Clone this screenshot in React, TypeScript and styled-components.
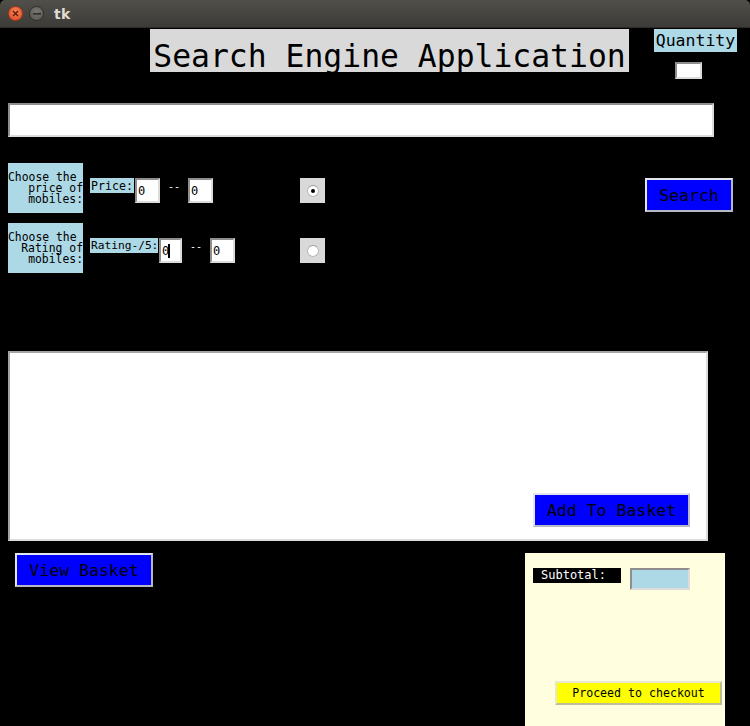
import React from "react";
import styled, { createGlobalStyle } from "styled-components";

const Global = createGlobalStyle`
  html, body { margin: 0; padding: 0; background: #000; }
  body { width: 750px; height: 726px; overflow: hidden; }
  * { box-sizing: border-box; }
`;

const MONO = `"DejaVu Sans Mono", "Liberation Mono", monospace`;

const Window = styled.div`
  width: 750px;
  height: 726px;
  display: flex;
  flex-direction: column;
  background: #000;
  font-family: ${MONO};
`;

const TitleBar = styled.div`
  height: 28px;
  flex: none;
  display: flex;
  align-items: center;
  padding-left: 8px;
  gap: 6px;
  background: linear-gradient(#504f4a, #3c3b37);
  border-radius: 5px 5px 0 0;
  border-bottom: 1px solid #2b2a27;
`;

const WinButton = styled.div<{ $kind: "close" | "min" }>`
  width: 15px;
  height: 15px;
  border-radius: 50%;
  display: flex;
  align-items: center;
  justify-content: center;
  background: ${(p) =>
    p.$kind === "close"
      ? "radial-gradient(circle at 50% 35%, #f58358, #df4a1f)"
      : "radial-gradient(circle at 50% 35%, #77766f, #56554f)"};
  border: 1px solid ${(p) => (p.$kind === "close" ? "#a8371a" : "#2f2e2a")};
`;

const TitleText = styled.span`
  margin-left: 4px;
  font-family: "DejaVu Sans", "Noto Sans", sans-serif;
  font-weight: bold;
  font-size: 14px;
  color: #dfdbd2;
  letter-spacing: 0.3px;
`;

const Content = styled.div`
  flex: 1;
  display: flex;
  flex-direction: column;
  padding-top: 1px;
  min-height: 0;
`;

const Header = styled.div`
  display: flex;
  align-items: flex-start;
  padding-left: 150px;
`;

const TitleLabel = styled.div`
  width: 479px;
  height: 43px;
  background: #d9d9d9;
  color: #000;
  font-size: 31.4px;
  line-height: 29px;
  display: flex;
  align-items: flex-start;
  justify-content: center;
  padding-top: 13px;
  white-space: pre;
`;

const QuantityBox = styled.div`
  margin-left: 25px;
  display: flex;
  flex-direction: column;
  align-items: flex-start;
`;

const BlueLabel = styled.div<{ $w: number; $h: number; $size: number }>`
  width: ${(p) => p.$w}px;
  height: ${(p) => p.$h}px;
  background: #add8e6;
  color: #000;
  font-size: ${(p) => p.$size}px;
  display: flex;
  align-items: center;
  justify-content: center;
  white-space: pre;
  flex: none;
`;

const Entry = styled.div<{ $w: number; $h: number; $bg?: string }>`
  width: ${(p) => p.$w}px;
  height: ${(p) => p.$h}px;
  flex: none;
  background: ${(p) => p.$bg ?? "#fff"};
  border-style: solid;
  border-width: 2px;
  border-color: #8e8e8e #dcdcdc #dcdcdc #8e8e8e;
  color: #000;
  font-size: 12px;
  display: flex;
  align-items: center;
  padding-left: 1px;
`;

const QtyEntry = styled(Entry)`
  margin-top: 10px;
  margin-left: 21px;
`;

const SearchEntry = styled(Entry)`
  margin-top: 24px;
  margin-left: 8px;
`;

const Criteria = styled.div`
  margin-top: 26px;
  display: flex;
  flex-direction: column;
  gap: 10px;
`;

const CriteriaRow = styled.div`
  display: flex;
  align-items: flex-start;
  height: 50px;
  padding-left: 8px;
`;

const ChooseLabel = styled.div`
  width: 75px;
  height: 50px;
  flex: none;
  background: #add8e6;
  color: #000;
  font-size: 11.4px;
  line-height: 11px;
  text-align: right;
  white-space: pre;
  display: flex;
  flex-direction: column;
  justify-content: center;
  padding-right: 0;
`;

const FieldGroup = styled.div`
  width: 210px;
  margin-left: 7px;
  margin-top: 15px;
  display: flex;
  align-items: flex-start;
  flex: none;
`;

const SmallLabel = styled(BlueLabel)`
  justify-content: flex-start;
  padding-left: 1px;
`;

const Dash = styled.span`
  width: 12px;
  margin: 3px 8px 0;
  color: #fff;
  font-size: 10px;
  line-height: 12px;
  white-space: pre;
  flex: none;
`;

const Caret = styled.span`
  display: inline-block;
  width: 2px;
  height: 14px;
  background: #000;
  margin-left: -1px;
`;

const RadioCell = styled.div`
  width: 25px;
  height: 25px;
  margin-top: 15px;
  flex: none;
  background: #d9d9d9;
  display: flex;
  align-items: center;
  justify-content: center;
`;

const RadioDot = styled.div<{ $on: boolean }>`
  width: 12px;
  height: 12px;
  border-radius: 50%;
  background: #fff;
  border: 1px solid #b8b8b8;
  border-top-color: #9a9a9a;
  display: flex;
  align-items: center;
  justify-content: center;
  &::after {
    content: "";
    width: 4px;
    height: 4px;
    border-radius: 50%;
    background: ${(p) => (p.$on ? "#000" : "transparent")};
  }
`;

const Button = styled.div<{ $w: number; $h: number; $bg: string; $size: number }>`
  width: ${(p) => p.$w}px;
  height: ${(p) => p.$h}px;
  flex: none;
  background: ${(p) => p.$bg};
  color: #000;
  font-size: ${(p) => p.$size}px;
  border-style: solid;
  border-width: 2px;
  border-color: #e4e4ec #b8b8c4 #b8b8c4 #e4e4ec;
  display: flex;
  align-items: center;
  justify-content: center;
  white-space: pre;
`;

const SearchButton = styled(Button)`
  margin-left: 320px;
  margin-top: 15px;
`;

const Listbox = styled.div`
  margin-top: 78px;
  margin-left: 8px;
  width: 700px;
  height: 190px;
  flex: none;
  background: #fff;
  border-style: solid;
  border-width: 2px;
  border-color: #a4a4a4 #dcdcdc #dcdcdc #a4a4a4;
  display: flex;
  justify-content: flex-end;
  align-items: flex-end;
  padding: 0 16px 12px 0;
`;

const BottomRow = styled.div`
  margin-top: 12px;
  flex: 1;
  display: flex;
  align-items: flex-start;
  padding-left: 15px;
`;

const BasketPanel = styled.div`
  margin-left: 372px;
  width: 200px;
  align-self: stretch;
  background: #ffffe0;
  display: flex;
  flex-direction: column;
  align-items: flex-start;
  padding: 15px 0 0 8px;
`;

const SubtotalRow = styled.div`
  display: flex;
  align-items: flex-start;
  gap: 9px;
`;

const SubtotalLabel = styled.div`
  width: 88px;
  height: 15px;
  background: #000;
  color: #fff;
  font-size: 12px;
  line-height: 15px;
  padding-left: 8px;
`;

const CheckoutButton = styled(Button)`
  margin-top: 91px;
  margin-left: 22px;
  border-color: #e8e8d0 #bdbd9a #bdbd9a #e8e8d0;
`;

export default function App() {
  return (
    <>
      <Global />
      <Window>
        <TitleBar>
          <WinButton $kind="close">
            <svg width="7" height="7" viewBox="0 0 7 7">
              <path d="M1 1L6 6M6 1L1 6" stroke="#5a1a08" strokeWidth="1.3" />
            </svg>
          </WinButton>
          <WinButton $kind="min">
            <svg width="8" height="2" viewBox="0 0 8 2">
              <rect width="8" height="1.6" fill="#2e2d29" />
            </svg>
          </WinButton>
          <TitleText>tk</TitleText>
        </TitleBar>
        <Content>
          <Header>
            <TitleLabel>Search Engine Application</TitleLabel>
            <QuantityBox>
              <BlueLabel $w={83} $h={23} $size={16.5}>Quantity</BlueLabel>
              <QtyEntry $w={27} $h={17} />
            </QuantityBox>
          </Header>
          <SearchEntry $w={706} $h={34} />
          <Criteria>
            <CriteriaRow>
              <ChooseLabel>{"Choose the \nprice of\nmobiles:"}</ChooseLabel>
              <FieldGroup>
                <SmallLabel $w={44} $h={15} $size={11.6}>Price:</SmallLabel>
                <Entry $w={25} $h={25} style={{ marginLeft: 1 }}>0</Entry>
                <Dash>--</Dash>
                <Entry $w={25} $h={25}>0</Entry>
              </FieldGroup>
              <RadioCell>
                <RadioDot $on={true} />
              </RadioCell>
              <SearchButton $w={88} $h={34} $bg="#0000ff" $size={16.5}>Search</SearchButton>
            </CriteriaRow>
            <CriteriaRow>
              <ChooseLabel>{"Choose the \nRating of\nmobiles:"}</ChooseLabel>
              <FieldGroup>
                <SmallLabel $w={68} $h={15} $size={11.2}>Rating-/5:</SmallLabel>
                <Entry $w={23} $h={25} style={{ marginLeft: 1 }}>
                  0<Caret />
                </Entry>
                <Dash>--</Dash>
                <Entry $w={25} $h={25}>0</Entry>
              </FieldGroup>
              <RadioCell>
                <RadioDot $on={false} />
              </RadioCell>
            </CriteriaRow>
          </Criteria>
          <Listbox>
            <Button $w={157} $h={34} $bg="#0000ff" $size={16.5}>Add To Basket</Button>
          </Listbox>
          <BottomRow>
            <Button $w={138} $h={34} $bg="#0000ff" $size={16.5}>View Basket</Button>
            <BasketPanel>
              <SubtotalRow>
                <SubtotalLabel>Subtotal:</SubtotalLabel>
                <Entry $w={60} $h={22} $bg="#add8e6" />
              </SubtotalRow>
              <CheckoutButton $w={167} $h={24} $bg="#ffff00" $size={11.6}>
                Proceed to checkout
              </CheckoutButton>
            </BasketPanel>
          </BottomRow>
        </Content>
      </Window>
    </>
  );
}
